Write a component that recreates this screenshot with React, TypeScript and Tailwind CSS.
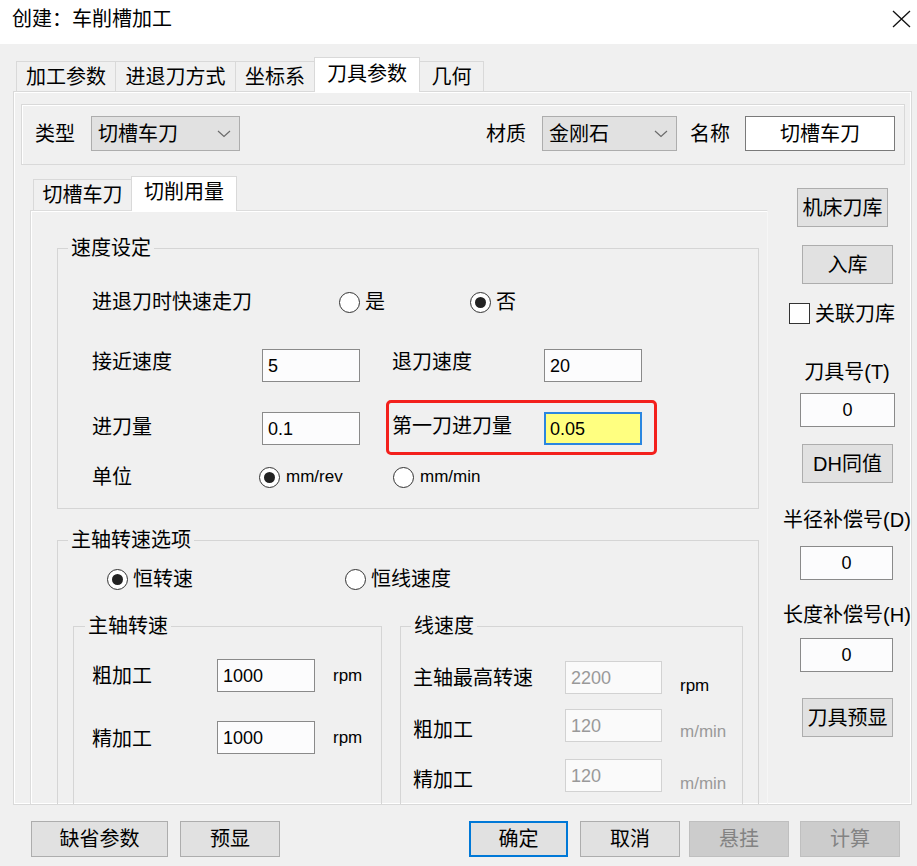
import React from "react";

type Kids = { children?: React.ReactNode; className?: string };

function Btn({ children, className = "" }: Kids) {
  return (
    <div className={`flex items-center justify-center border border-[#adadad] bg-[#e1e1e1] ${className}`}>
      {children}
    </div>
  );
}

function TextBox({
  value,
  className = "",
  disabled = false,
  center = false,
}: {
  value: string;
  className?: string;
  disabled?: boolean;
  center?: boolean;
}) {
  return (
    <div
      className={`flex items-center border text-[18px] leading-[22px] ${
        disabled ? "border-[#d2d2d2] bg-[#fafafa] text-[#999999]" : "border-[#8a8a8a] bg-[#fcfcfd] text-black"
      } ${center ? "justify-center" : "pl-[5px]"} ${className}`}
    >
      {value}
    </div>
  );
}

function Radio({ checked = false, label, className = "", latin = false }: { checked?: boolean; label: string; className?: string; latin?: boolean }) {
  return (
    <div className={`flex items-center ${className}`}>
      <span className="flex h-[21px] w-[21px] items-center justify-center rounded-full border border-[#333] bg-white">
        {checked && <span className="h-[11px] w-[11px] rounded-full bg-[#222]" />}
      </span>
      <span className={latin ? "ml-[6px] text-[17px] leading-[22px]" : "ml-[5px]"}>{label}</span>
    </div>
  );
}

function Select({ value, className = "" }: { value: string; className?: string }) {
  return (
    <div className={`flex h-[35px] items-center justify-between border border-[#adadad] bg-[#e1e1e1] pl-[6px] pr-[8px] ${className}`}>
      <span>{value}</span>
      <svg width="14" height="8" viewBox="0 0 14 8">
        <path d="M1 1l6 5.5L13 1" fill="none" stroke="#6a6a6a" strokeWidth="1.2" />
      </svg>
    </div>
  );
}

export default function App() {
  return (
    <div className="flex h-[866px] w-[917px] flex-col overflow-hidden bg-[#f0f0f0] font-[family-name:'Liberation_Sans','Noto_Sans_CJK_SC',sans-serif] text-[20px] leading-[26px] text-black">
      {/* Title bar */}
      <div className="flex h-[44px] shrink-0 items-center justify-between bg-white pl-[12px] pr-[6px]">
        <span className="mb-[6px]">创建：车削槽加工</span>
        <svg width="19" height="18" viewBox="0 0 19 18" className="mb-[7px]">
          <path d="M1 1L18 17M18 1L1 17" stroke="#111" strokeWidth="1.3" fill="none" />
        </svg>
      </div>

      <div className="flex flex-1 flex-col pl-[13px] pt-[13px]">
        {/* Outer tabs */}
        <div className="ml-[3px] flex h-[34px] items-end">
          <div className="flex h-[30px] w-[100px] items-center justify-center border border-b-0 border-[#d9d9d9]">加工参数</div>
          <div className="-ml-px flex h-[30px] w-[121px] items-center justify-center border border-b-0 border-[#d9d9d9]">进退刀方式</div>
          <div className="-ml-px flex h-[30px] w-[80px] items-center justify-center border border-b-0 border-[#d9d9d9]">坐标系</div>
          <div className="relative z-10 -mb-px -ml-px flex h-[35px] w-[106px] items-center justify-center border border-b-0 border-[#d9d9d9] bg-white pb-[2px]">刀具参数</div>
          <div className="-ml-px flex h-[30px] w-[65px] items-center justify-center border border-b-0 border-[#d9d9d9]">几何</div>
        </div>

        {/* Outer panel */}
        <div className="h-[714px] w-[899px] overflow-hidden border border-[#d9d9d9] shadow-[inset_1px_1px_0_#fff,inset_-1px_-1px_0_#fff]">
          <div className="ml-[7px] mt-[12px] flex h-[61px] w-[884px] items-center border border-[#d9d9d9] pb-[2px] pl-[13px] pr-[9px] shadow-[inset_1px_1px_0_#fff]">
            <span>类型</span>
            <Select className="ml-[16px] w-[149px]" value="切槽车刀" />
            <div className="flex-1" />
            <span>材质</span>
            <Select className="ml-[16px] w-[135px]" value="金刚石" />
            <span className="ml-[13px]">名称</span>
            <div className="ml-[15px] flex h-[35px] w-[150px] items-center justify-center border border-[#7a7a7a] bg-white">切槽车刀</div>
          </div>

          <div className="mt-[11px] flex items-start">
            {/* Left: inner tabs */}
            <div className="ml-[16px] w-[738px]">
              <div className="ml-[3px] flex h-[34px] items-end">
                <div className="flex h-[31px] w-[99px] items-center justify-center border border-b-0 border-[#d9d9d9]">切槽车刀</div>
                <div className="relative z-10 -mb-px -ml-px flex h-[35px] w-[106px] items-center justify-center border border-b-0 border-[#d9d9d9] bg-white pb-[4px]">切削用量</div>
              </div>
              <div className="h-[620px] border border-[#dcdcdc] border-r-[#f6f6f6] shadow-[inset_1px_1px_0_#fff]">
                {/* 速度设定 */}
                <fieldset className="ml-[26px] mt-[24px] w-[702px] border border-[#d5d5d5] pb-[16px]">
                  <legend className="ml-[10px] px-[3px]">速度设定</legend>
                  <div className="mt-[24px] flex h-[34px] items-center pl-[34px]">
                    <span className="w-[247px]">进退刀时快速走刀</span>
                    <Radio label="是" className="w-[131px]" />
                    <Radio checked label="否" />
                  </div>
                  <div className="mt-[30px] flex h-[33px] items-center pl-[34px]">
                    <span className="mb-[8px] w-[170px]">接近速度</span>
                    <TextBox value="5" className="h-[33px] w-[98px]" />
                    <span className="mb-[8px] ml-[32px] w-[152px]">退刀速度</span>
                    <TextBox value="20" className="h-[33px] w-[98px]" />
                  </div>
                  <div className="mt-[30px] flex h-[33px] items-center pl-[34px]">
                    <span className="mb-[3px] w-[170px]">进刀量</span>
                    <TextBox value="0.1" className="h-[33px] w-[98px]" />
                    <div className="relative ml-[32px] flex items-center">
                      <span className="mb-[6px] w-[152px]">第一刀进刀量</span>
                      <div className="flex h-[33px] w-[98px] items-center border-2 border-[#2a86e0] bg-[#ffff80] pl-[4px] text-[18px] leading-[22px]">0.05</div>
                      <span className="pointer-events-none absolute -bottom-[10px] -left-[6px] -right-[15px] -top-[12px] rounded-[5px] border-[3px] border-[#f3201c]" />
                    </div>
                  </div>
                  <div className="mt-[17px] flex h-[30px] items-center pl-[34px]">
                    <span className="w-[167px]">单位</span>
                    <Radio checked latin label="mm/rev" className="w-[134px]" />
                    <Radio latin label="mm/min" />
                  </div>
                </fieldset>

                {/* 主轴转速选项 */}
                <fieldset className="ml-[26px] mt-[18px] w-[702px] border border-[#d5d5d5] pb-[40px]">
                  <legend className="ml-[10px] px-[3px]">主轴转速选项</legend>
                  <div className="mt-[11px] flex h-[30px] items-center pl-[49px]">
                    <Radio checked label="恒转速" className="w-[238px]" />
                    <Radio label="恒线速度" />
                  </div>
                  <div className="mt-[19px] flex items-start">
                    <fieldset className="ml-[15px] w-[309px] border border-[#d5d5d5] pb-[60px]">
                      <legend className="ml-[11px] px-[3px]">主轴转速</legend>
                      <div className="mt-[20px] flex h-[33px] items-center pl-[18px]">
                        <span className="w-[125px]">粗加工</span>
                        <TextBox value="1000" className="h-[33px] w-[98px]" />
                        <span className="ml-[18px] text-[17px] leading-[22px]">rpm</span>
                      </div>
                      <div className="mt-[29px] flex h-[33px] items-center pl-[18px]">
                        <span className="mt-[3px] w-[125px]">精加工</span>
                        <TextBox value="1000" className="h-[33px] w-[98px]" />
                        <span className="ml-[18px] text-[17px] leading-[22px]">rpm</span>
                      </div>
                    </fieldset>
                    <fieldset className="ml-[18px] w-[343px] border border-[#d5d5d5] pb-[60px]">
                      <legend className="ml-[10px] px-[3px]">线速度</legend>
                      <div className="mt-[22px] flex h-[33px] items-center pl-[12px]">
                        <span className="w-[152px]">主轴最高转速</span>
                        <TextBox disabled value="2200" className="h-[33px] w-[97px]" />
                        <span className="ml-[18px] mt-[16px] text-[17px] leading-[22px]">rpm</span>
                      </div>
                      <div className="mt-[15px] flex h-[33px] items-center pl-[12px]">
                        <span className="mt-[9px] w-[152px]">粗加工</span>
                        <TextBox disabled value="120" className="h-[33px] w-[97px]" />
                        <span className="ml-[18px] mt-[13px] text-[17px] leading-[22px] text-[#9a9a9a]">m/min</span>
                      </div>
                      <div className="mt-[17px] flex h-[33px] items-center pl-[12px]">
                        <span className="mt-[9px] w-[152px]">精加工</span>
                        <TextBox disabled value="120" className="h-[33px] w-[97px]" />
                        <span className="ml-[18px] mt-[16px] text-[17px] leading-[22px] text-[#9a9a9a]">m/min</span>
                      </div>
                    </fieldset>
                  </div>
                </fieldset>
              </div>
            </div>

            {/* Right column */}
            <div className="ml-[15px] flex w-[128px] flex-col items-start pt-[12px]">
              <Btn className="ml-[14px] h-[39px] w-[91px]">机床刀库</Btn>
              <Btn className="ml-[19px] mt-[18px] h-[39px] w-[91px]">入库</Btn>
              <div className="ml-[6px] mt-[19px] flex h-[21px] items-center">
                <span className="h-[21px] w-[21px] border border-[#333] bg-white" />
                <span className="ml-[5px]">关联刀库</span>
              </div>
              <div className="mt-[35px] w-full text-center">刀具号(T)</div>
              <TextBox center value="0" className="ml-[17px] mt-[8px] h-[34px] w-[95px]" />
              <Btn className="ml-[19px] mt-[17px] h-[39px] w-[91px]">DH同值</Btn>
              <div className="mt-[24px] w-full whitespace-nowrap text-center">半径补偿号(D)</div>
              <TextBox center value="0" className="ml-[17px] mt-[13px] h-[34px] w-[93px]" />
              <div className="mt-[22px] w-full whitespace-nowrap text-center">长度补偿号(H)</div>
              <TextBox center value="0" className="ml-[17px] mt-[10px] h-[34px] w-[93px]" />
              <Btn className="ml-[19px] mt-[26px] h-[39px] w-[91px]">刀具预显</Btn>
            </div>
          </div>
        </div>

        {/* Bottom buttons */}
        <div className="mt-[16px] flex h-[36px]">
          <Btn className="ml-[18px] w-[137px]">缺省参数</Btn>
          <Btn className="ml-[12px] w-[100px]">预显</Btn>
          <div className="ml-[189px] flex w-[99px] items-center justify-center border-2 border-[#0078d7] bg-[#e1e1e1]">确定</div>
          <Btn className="ml-[12px] w-[100px]">取消</Btn>
          <div className="ml-[9px] flex w-[100px] items-center justify-center border border-[#bfbfbf] bg-[#cccccc] text-[#838383]">悬挂</div>
          <div className="ml-[11px] flex w-[100px] items-center justify-center border border-[#bfbfbf] bg-[#cccccc] text-[#838383]">计算</div>
        </div>
      </div>
    </div>
  );
}
